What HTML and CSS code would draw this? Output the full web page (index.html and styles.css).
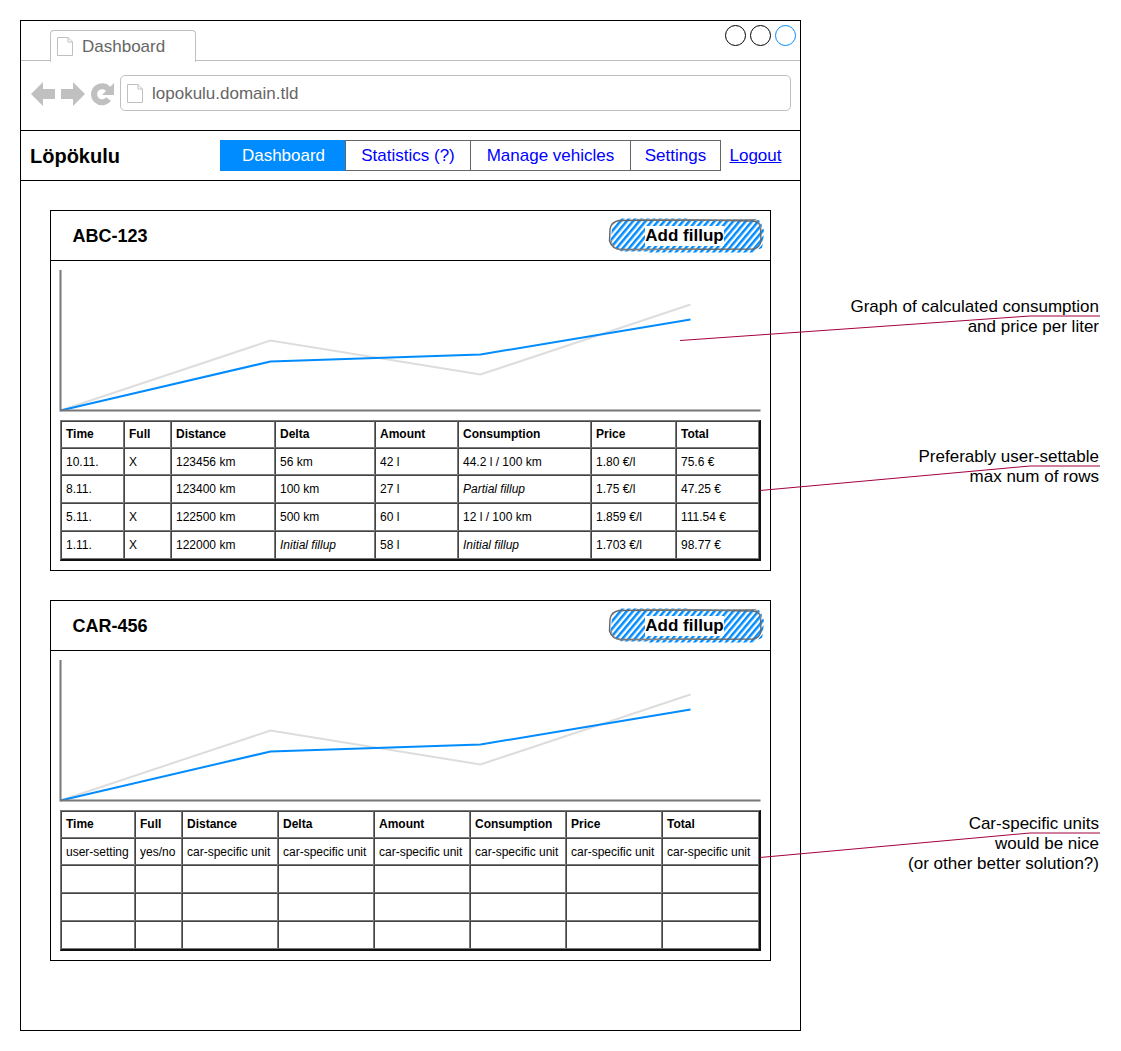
FILE: index.html
```html
<!DOCTYPE html>
<html>
<head>
	<meta http-equiv="Content-Type" content="text/html; charset=utf-8">
	<title>Lopokulu mockup</title>
	<link rel="stylesheet" href="styles.css">
</head>
<body>
	<!-- shared drawings -->
	<svg class="defs" width="0" height="0">
		<defs>
			<pattern id="hatch" width="4.800" height="6" patternUnits="userSpaceOnUse" patternTransform="rotate(40)">
				<rect x="0" y="0" width="2.500" height="6" fill="#008cff"/>
			</pattern>
			<symbol id="doc" viewBox="0 0 16 19">
				<path d="M.5.5H11L15.5 5V18.5H.5Z M11 .5V5H15.5" fill="#fff" stroke="#c0c0c0"/>
			</symbol>
			<symbol id="chart" viewBox="0 0 719 159">
				<polyline points="9.500,149.500 219.500,79.500 429.500,113.500 639.500,43.500" fill="none" stroke="#ddd" stroke-width="2"/>
				<polyline points="9.500,149.500 219.500,100.500 429.500,93.500 639.500,58.500" fill="none" stroke="#008cff" stroke-width="2"/>
				<polyline points="9.500,9 9.500,149.500 709.500,149.500" fill="none" stroke="#777" stroke-width="2"/>
			</symbol>
			<symbol id="sketch" viewBox="0 0 156 36" overflow="visible">
				<path d="M3 11Q4 3 11 2L12 .5H80L82 1.500H146L147 .5 151 3Q153 6 153.500 10L155 12 154 25 153 30 146 32.500 145 34.500H40L38 33.500H12L11 32Q3 30 1.500 23Z" fill="url(#hatch)"/>
				<path d="M10 2.500L88 2 143 3Q151 3 151.500 10L152 23Q151 30 144 31L12 31.500Q3 31 .5 23L1 11Q2 4 10 2.500Z" fill="none" stroke="#666" stroke-width="1.400"/>
				<path d="M28 1.500L110 2 146 1.500Q151 3 152 12M2 22Q3 30 11 32L90 31" fill="none" stroke="#888" stroke-width="1"/>
			</symbol>
		</defs>
	</svg>

	<div id="window">
		<div class="tabstrip">
			<div class="browser-tab">
				<svg class="doc-icon"><use href="#doc"/></svg>
				<span>Dashboard</span>
			</div>
			<div class="win-btns">
				<span class="win-btn"></span>
				<span class="win-btn"></span>
				<span class="win-btn win-btn-on"></span>
			</div>
		</div>

		<div class="urlbar">
			<svg class="nav-icon" viewBox="0 0 24 24"><path d="M0 12L12 0V7H24V17H12V24Z" fill="#c0c0c0"/></svg>
			<svg class="nav-icon" viewBox="0 0 24 24"><path d="M24 12L12 0V7H0V17H12V24Z" fill="#c0c0c0"/></svg>
			<svg class="nav-icon" viewBox="0 0 24 24">
				<path d="M17.500 7.500A8 8 0 1 0 17.500 17" fill="none" stroke="#c0c0c0" stroke-width="6"/>
				<path d="M23 1V13H11Z" fill="#c0c0c0"/>
			</svg>
			<div class="address">
				<svg class="doc-icon"><use href="#doc"/></svg>
				<span>lopokulu.domain.tld</span>
			</div>
		</div>

		<div class="topnav">
			<div class="logo">Löpökulu</div>
			<ul class="menu">
				<li class="on">Dashboard</li>
				<li>Statistics (?)</li>
				<li>Manage vehicles</li>
				<li>Settings</li>
			</ul>
			<a class="logout" href="#">Logout</a>
		</div>

		<div class="content">
			<div class="card">
				<div class="card-head">
					<h2>ABC-123</h2>
					<button class="add-btn">
						<svg class="sketch"><use href="#sketch"/></svg>
						<span>Add fillup</span>
					</button>
				</div>
				<svg class="chart"><use href="#chart"/></svg>
				<table class="fillups fillups-a">
					<thead>
						<tr><th>Time</th><th>Full</th><th>Distance</th><th>Delta</th><th>Amount</th><th>Consumption</th><th>Price</th><th>Total</th></tr>
					</thead>
					<tbody>
						<tr><td>10.11.</td><td>X</td><td>123456 km</td><td>56 km</td><td>42 l</td><td>44.2 l / 100 km</td><td>1.80 €/l</td><td>75.6 €</td></tr>
						<tr><td>8.11.</td><td></td><td>123400 km</td><td>100 km</td><td>27 l</td><td><i>Partial fillup</i></td><td>1.75 €/l</td><td>47.25 €</td></tr>
						<tr><td>5.11.</td><td>X</td><td>122500 km</td><td>500 km</td><td>60 l</td><td>12 l / 100 km</td><td>1.859 €/l</td><td>111.54 €</td></tr>
						<tr><td>1.11.</td><td>X</td><td>122000 km</td><td><i>Initial fillup</i></td><td>58 l</td><td><i>Initial fillup</i></td><td>1.703 €/l</td><td>98.77 €</td></tr>
					</tbody>
				</table>
			</div>

			<div class="card">
				<div class="card-head">
					<h2>CAR-456</h2>
					<button class="add-btn">
						<svg class="sketch"><use href="#sketch"/></svg>
						<span>Add fillup</span>
					</button>
				</div>
				<svg class="chart"><use href="#chart"/></svg>
				<table class="fillups fillups-b">
					<thead>
						<tr><th>Time</th><th>Full</th><th>Distance</th><th>Delta</th><th>Amount</th><th>Consumption</th><th>Price</th><th>Total</th></tr>
					</thead>
					<tbody>
						<tr><td>user-setting</td><td>yes/no</td><td>car-specific unit</td><td>car-specific unit</td><td>car-specific unit</td><td>car-specific unit</td><td>car-specific unit</td><td>car-specific unit</td></tr>
						<tr><td></td><td></td><td></td><td></td><td></td><td></td><td></td><td></td></tr>
						<tr><td></td><td></td><td></td><td></td><td></td><td></td><td></td><td></td></tr>
						<tr><td></td><td></td><td></td><td></td><td></td><td></td><td></td><td></td></tr>
					</tbody>
				</table>
			</div>
		</div>
	</div>

	<!-- annotations over the mockup -->
	<svg class="callouts" width="1121" height="1051">
		<polyline points="680,340.500 1030,316 1100,316"/>
		<polyline points="760,490.500 1030,466 1100,466"/>
		<polyline points="760,857.500 1030,833 1100,833"/>
	</svg>
	<div class="note note-graph">Graph of calculated consumption<br>and price per liter</div>
	<div class="note note-rows">Preferably user-settable<br>max num of rows</div>
	<div class="note note-units">Car-specific units<br>would be nice<br>(or other better solution?)</div>
</body>
</html>
```

FILE: styles.css
```css
*{
	box-sizing:border-box;
}
html,body{
	margin:0;
	padding:0;
}
body{
	position:relative;
	width:1121px;
	height:1051px;
	padding:20px;
	overflow:hidden;
	background:#fff;
	color:#000;
	font-family:"Liberation Sans",Arial,sans-serif;
	font-size:17px;
}
.defs{
	position:absolute;
}
#window{
	width:781px;
	height:1011px;
	border:1px solid #000;
}

/* browser chrome */
.tabstrip{
	display:flex;
	justify-content:space-between;
	height:40px;
	padding:4px 4px 0 29px;
	border-bottom:1px solid #c0c0c0;
}
.browser-tab{
	display:flex;
	align-items:center;
	gap:9px;
	width:146px;
	height:32px;
	margin-top:5px;
	padding:0 0 0 6px;
	border:1px solid #c0c0c0;
	border-bottom:none;
	border-radius:4px 4px 0 0;
	background:#fff;
	color:#666;
}
.doc-icon{
	display:block;
	flex:none;
	width:16px;
	height:19px;
}
.win-btns{
	display:flex;
	gap:4px;
}
.win-btn{
	width:21px;
	height:21px;
	border:1px solid #000;
	border-radius:50%;
}
.win-btn-on{
	border-color:#008cff;
}
.urlbar{
	display:flex;
	align-items:center;
	gap:6px;
	height:70px;
	padding:0 9px 4px 10px;
	border-bottom:1px solid #000;
}
.nav-icon{
	flex:none;
	width:24px;
	height:24px;
}
.address{
	display:flex;
	align-items:center;
	gap:9px;
	flex:1;
	height:36px;
	margin:0 0 2px -1px;
	padding:2px 0 0 6px;
	border:1px solid #c0c0c0;
	border-radius:5px;
	color:#666;
}

/* site nav */
.topnav{
	display:flex;
	align-items:center;
	height:50px;
	padding:0 18px 0 9px;
	border-bottom:1px solid #000;
}
.logo{
	flex:none;
	width:190px;
	padding-top:2px;
	font-size:20px;
	font-weight:bold;
}
.menu{
	display:flex;
	flex:none;
	height:31px;
	margin:0 8.5px 0 0;
	padding:0;
	list-style:none;
	border:1px solid #666;
	color:#00f;
}
.menu li{
	width:125px;
	line-height:29px;
	text-align:center;
	border-left:1px solid #666;
}
.menu li:first-child{
	border-left:none;
}
.menu li:nth-child(3){
	width:160px;
}
.menu li:nth-child(4){
	width:90px;
}
.menu .on{
	width:125px;
	margin:-1px 0 -1px -1px;
	padding-left:2px;
	line-height:31px;
	background:#008cff;
	color:#fff;
}
.logout{
	color:#00f;
}

/* cards */
.content{
	padding:29px 0 0 29px;
}
.card{
	width:721px;
	height:361px;
	margin-bottom:29px;
	border:1px solid #000;
}
.card-head{
	display:flex;
	align-items:center;
	justify-content:space-between;
	height:50px;
	padding:0 7px 0 21px;
	border-bottom:1px solid #000;
}
.card-head h2{
	margin:0;
	padding:2px 0 0 0.5px;
	font-size:18px;
	font-weight:bold;
}
.add-btn{
	position:relative;
	display:flex;
	align-items:center;
	justify-content:center;
	width:154px;
	height:34px;
	padding:0 3px 0 0;
	border:none;
	background:none;
	font-family:inherit;
	font-size:17px;
	font-weight:bold;
	color:#000;
}
.add-btn span{
	position:relative;
	line-height:20px;
	background:#fff;
}
.sketch{
	position:absolute;
	left:0;
	top:-1px;
	width:156px;
	height:36px;
	overflow:visible;
}
.chart{
	display:block;
	width:719px;
	height:159px;
}

/* tables */
.fillups{
	width:701px;
	margin-left:9px;
	table-layout:fixed;
	border-collapse:separate;
	border-spacing:0;
	border-style:solid;
	border-width:1px 2px 2px 1px;
	border-color:#777 #111 #111 #777;
	font-size:12px;
}
.fillups tr{
	height:28px;
}
.fillups thead tr,
.fillups tbody tr:first-child{
	height:27px;
}
.fillups th,
.fillups td{
	padding:0 0 0 4px;
	border:1px solid;
	border-color:#444 #777 #777 #444;
	text-align:left;
	white-space:nowrap;
	overflow:hidden;
}
.fillups th{
	padding-bottom:2px;
}
.fillups-a th:nth-child(1){width:63px;}
.fillups-a th:nth-child(2){width:47px;}
.fillups-a th:nth-child(3){width:104px;}
.fillups-a th:nth-child(4){width:100px;}
.fillups-a th:nth-child(5){width:83px;}
.fillups-a th:nth-child(6){width:133px;}
.fillups-a th:nth-child(7){width:85px;}
.fillups-a th:nth-child(8){width:83px;}
.fillups-b th:nth-child(1){width:74px;}
.fillups-b th:nth-child(2){width:47px;}
.fillups-b th:nth-child(3){width:96px;}
.fillups-b th:nth-child(4){width:96px;}
.fillups-b th:nth-child(5){width:96px;}
.fillups-b th:nth-child(6){width:96px;}
.fillups-b th:nth-child(7){width:96px;}
.fillups-b th:nth-child(8){width:97px;}

/* annotations */
.callouts{
	position:absolute;
	left:0;
	top:0;
	pointer-events:none;
}
.callouts polyline{
	fill:none;
	stroke:#a50040;
	stroke-width:1;
}
.note{
	position:absolute;
	right:22px;
	line-height:20px;
	text-align:right;
}
.note-graph{top:297px;}
.note-rows{top:447px;}
.note-units{top:814px;}
```
